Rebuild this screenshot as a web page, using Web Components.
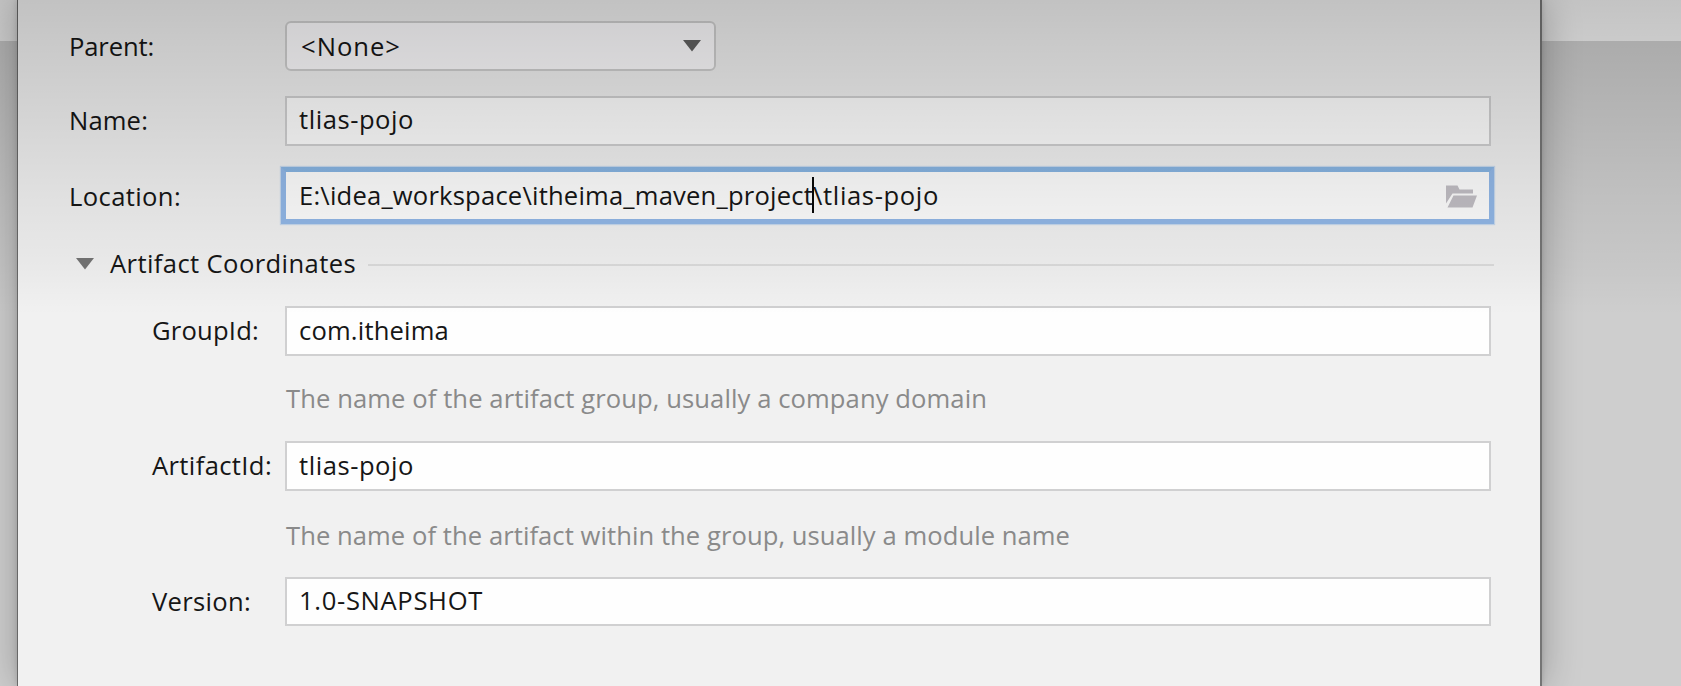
<!DOCTYPE html>
<html lang="en">
<head>
<meta charset="utf-8">
<title>New Module</title>
<style>
html,body{margin:0;height:100%;overflow:hidden}
body{font:25.6px/32px "Open Sans","Noto Sans",sans-serif;color:#161616}
</style>
</head>
<body>
<module-window></module-window>
<script>
const define = (name, html, setup) => customElements.define(name, class extends HTMLElement {
  connectedCallback() {
    if (this.shadowRoot) return;
    this.attachShadow({mode: 'open'}).innerHTML = html;
    if (setup) setup(this, this.shadowRoot);
  }
});

// Text whose tracking is set so that it takes up a given advance width.
define('fit-text', `<style>
:host{display:block;width:max-content;white-space:pre;flex:none}
span{display:block;width:max-content;padding-top:1px;margin-bottom:-1px}
</style><span><slot></slot></span>`, (el, root) => {
  const s = root.querySelector('span'), w = +el.getAttribute('w');
  const n = el.textContent.length;
  s.style.letterSpacing = ((w - s.getBoundingClientRect().width) / n).toFixed(3) + 'px';
});

define('text-field', `<style>
:host{display:flex;align-items:center;box-sizing:border-box;width:1206px;height:50px;padding:0 12px 2px 12px;border:2px solid #d0d0d1;background:#fefefe}
:host([focused]){width:1213px;height:57px;margin-left:-4px;border:5px solid #92b8e8;border-top-color:#88b5e3;padding:0 12px 2px 13px;box-shadow:0 0 1px 1px #c7d9ee}
slot[name=end]{display:block;padding-top:3px}
.grow{flex:1}
</style><slot></slot><span class="grow"></span><slot name="end"></slot>`);

define('combo-box', `<style>
:host{display:flex;align-items:center;justify-content:space-between;box-sizing:border-box;width:431px;height:50px;padding:0 13px 0 14px;border:2px solid #d0d0d0;border-radius:6px;background:#fefdff}
svg{display:block}
</style><slot></slot><svg width="18" height="12" viewBox="0 0 18 12"><path d="M0 0h18L9 11.5z" fill="#616161"/></svg>`);

define('text-caret', `<style>
:host{display:inline-block;width:0;height:36px;position:relative}
i{position:absolute;left:-1px;top:0;width:2px;height:36px;background:#080808}
</style><i></i>`);

define('folder-icon', `<style>:host{display:block}svg{display:block}</style>
<svg width="31" height="23" viewBox="0 0 31 23" fill="#c2bfc5"><path d="M0 .5h11.5l2 4H27v4H6.5L0 18.5z"/><path d="M7.5 10.5H31L26.5 22.5H1.5z"/></svg>`);

define('form-row', `<style>
:host{display:flex;align-items:center;height:50px}
.label{width:216px;flex:none;display:flex;position:relative;padding-bottom:3px}
:host([nested]) .label{padding-left:83px;width:133px;padding-bottom:3px}
</style><div class="label"><slot name="label"></slot></div><slot></slot>`);

define('hint-text', `<style>
:host{display:block;height:32px;padding-left:217px;color:#8a8a8a}
</style><slot></slot>`);

define('section-title', `<style>
:host{display:flex;align-items:center;height:32px;padding-left:7px}
svg{margin-right:16px;flex:none}
::slotted(*){margin-top:-2px}
hr{border:0;height:2px;width:1126px;background:#dcdcdc;margin:2px 0 0 12px}
</style><svg width="18" height="12" viewBox="0 0 18 12"><path d="M0 0h18L9 11.5z" fill="#747474"/></svg><slot></slot><hr>`);

define('module-dialog', `<style>
:host{display:block;box-sizing:border-box;width:1525px;height:686px;padding:21px 0 0 51px;background:#f1f1f1;border-left:1px solid #686868;border-right:2px solid #757575;box-shadow:0 0 6px rgba(0,0,0,.14),0 0 36px rgba(0,0,0,.27)}
form-row{margin-bottom:25px}
</style>
<form-row><fit-text slot="label" w="85" style="margin-top:2px">Parent:</fit-text><combo-box><fit-text w="100">&lt;None&gt;</fit-text></combo-box></form-row>
<form-row style="margin-bottom:21px"><fit-text slot="label" w="79">Name:</fit-text><text-field><fit-text w="115" style="margin-top:-2px">tlias-pojo</fit-text></text-field></form-row>
<form-row style="height:57px;margin-bottom:24px"><fit-text slot="label" w="112" style="margin-top:3px">Location:</fit-text><text-field focused><fit-text w="514">E:\\idea_workspace\\itheima_maven_project</fit-text><text-caret></text-caret><fit-text w="126">\\tlias-pojo</fit-text><folder-icon slot="end"></folder-icon></text-field></form-row>
<section-title><fit-text w="246">Artifact Coordinates</fit-text></section-title>
<form-row nested style="margin:26px 0 26px"><fit-text slot="label" w="107">GroupId:</fit-text><text-field><fit-text w="150">com.itheima</fit-text></text-field></form-row>
<hint-text><fit-text w="701">The name of the artifact group, usually a company domain</fit-text></hint-text>
<form-row nested style="margin:27px 0 28px"><fit-text slot="label" w="120">ArtifactId:</fit-text><text-field><fit-text w="115">tlias-pojo</fit-text></text-field></form-row>
<hint-text><fit-text w="784">The name of the artifact within the group, usually a module name</fit-text></hint-text>
<form-row nested style="margin:25px 0 0"><fit-text slot="label" w="99" style="margin-top:2px">Version:</fit-text><text-field style="height:49px"><fit-text w="184">1.0-SNAPSHOT</fit-text></text-field></form-row>
`);

// The window behind the dialog, with the shade that falls from its top edge.
define('module-window', `<style>
:host{display:flex;position:relative;width:1681px;height:686px;overflow:hidden;padding-left:17px;box-sizing:border-box;background:linear-gradient(#f3f3f3 0 41px,#cecece 41px)}
module-dialog{flex:none}
.shade{position:absolute;inset:0;pointer-events:none;background:linear-gradient(rgba(0,0,0,.195),rgba(0,0,0,.165) 45px,rgba(0,0,0,.118) 120px,rgba(0,0,0,.07) 195px,rgba(0,0,0,.035) 265px,transparent 315px)}
</style><module-dialog></module-dialog><div class="shade"></div>`);
</script>
</body>
</html>
